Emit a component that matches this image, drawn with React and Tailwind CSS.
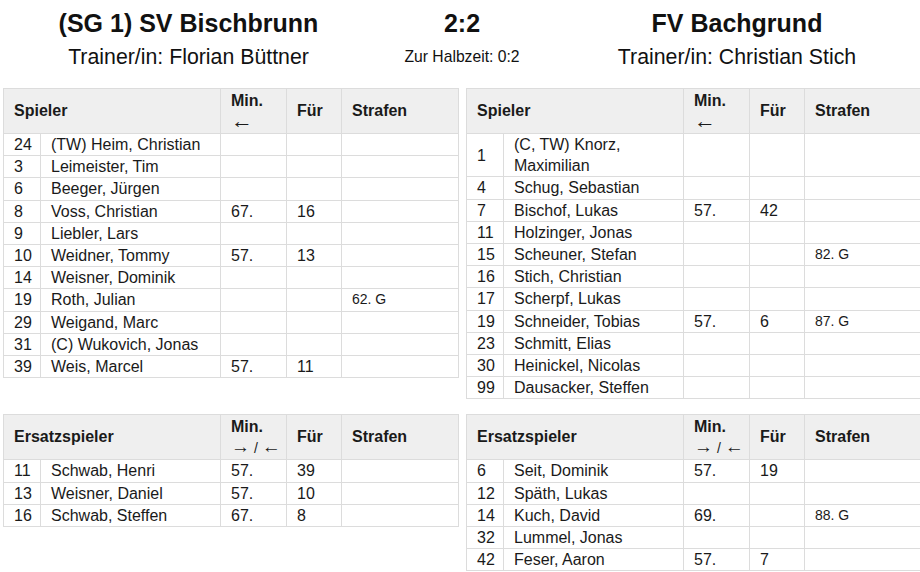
const home = {
  team: '(SG 1) SV Bischbrunn',
  coach: 'Florian Büttner',
  players: [
    ['24', '(TW) Heim, Christian', '', '', ''],
    ['3', 'Leimeister, Tim', '', '', ''],
    ['6', 'Beeger, Jürgen', '', '', ''],
    ['8', 'Voss, Christian', '67.', '16', ''],
    ['9', 'Liebler, Lars', '', '', ''],
    ['10', 'Weidner, Tommy', '57.', '13', ''],
    ['14', 'Weisner, Dominik', '', '', ''],
    ['19', 'Roth, Julian', '', '', '62. G'],
    ['29', 'Weigand, Marc', '', '', ''],
    ['31', '(C) Wukovich, Jonas', '', '', ''],
    ['39', 'Weis, Marcel', '57.', '11', ''],
  ],
  subs: [
    ['11', 'Schwab, Henri', '57.', '39', ''],
    ['13', 'Weisner, Daniel', '57.', '10', ''],
    ['16', 'Schwab, Steffen', '67.', '8', ''],
  ],
};

const away = {
  team: 'FV Bachgrund',
  coach: 'Christian Stich',
  players: [
    ['1', '(C, TW) Knorz, Maximilian', '', '', ''],
    ['4', 'Schug, Sebastian', '', '', ''],
    ['7', 'Bischof, Lukas', '57.', '42', ''],
    ['11', 'Holzinger, Jonas', '', '', ''],
    ['15', 'Scheuner, Stefan', '', '', '82. G'],
    ['16', 'Stich, Christian', '', '', ''],
    ['17', 'Scherpf, Lukas', '', '', ''],
    ['19', 'Schneider, Tobias', '57.', '6', '87. G'],
    ['23', 'Schmitt, Elias', '', '', ''],
    ['30', 'Heinickel, Nicolas', '', '', ''],
    ['99', 'Dausacker, Steffen', '', '', ''],
  ],
  subs: [
    ['6', 'Seit, Dominik', '57.', '19', ''],
    ['12', 'Späth, Lukas', '', '', ''],
    ['14', 'Kuch, David', '69.', '', '88. G'],
    ['32', 'Lummel, Jonas', '', '', ''],
    ['42', 'Feser, Aaron', '57.', '7', ''],
  ],
};

function LineupTable({ title, subs, rows }) {
  const th = 'border border-[#dcdcdc] px-[10px] py-[2px] text-left align-middle text-[16px] font-bold leading-[20px]';
  const td = 'border border-[#dcdcdc] px-[10px] py-0 align-middle leading-[21.2px]';
  return (
    <table className="w-[456px] table-fixed border-collapse text-[16px] text-[#1a1a1a]">
      <colgroup>
        <col className="w-[37px]" />
        <col className="w-[180px]" />
        <col className="w-[66px]" />
        <col className="w-[55px]" />
        <col />
      </colgroup>
      <thead>
        <tr className="bg-[#efefef]">
          <th colSpan={2} className={th}>{title}</th>
          <th className={th}>
            Min.
            <span className="block h-[20px] overflow-visible whitespace-nowrap font-normal leading-[20px]">
              {subs ? (
                <>
                  <span className="text-[19px] leading-[20px]">→</span>
                  <span className="text-[14px] leading-[20px]"> / </span>
                  <span className="text-[19px] leading-[20px]">←</span>
                </>
              ) : (
                <span className="text-[22px] leading-[20px]">←</span>
              )}
            </span>
          </th>
          <th className={th}>Für</th>
          <th className={th}>Strafen</th>
        </tr>
      </thead>
      <tbody>
        {rows.map(([nr, name, min, fuer, strafe]) => (
          <tr key={nr + name}>
            <td className={td}>{nr}</td>
            <td className={td}>{name}</td>
            <td className={td}>{min}</td>
            <td className={td}>{fuer}</td>
            <td className={`${td} text-[14px]`}>{strafe}</td>
          </tr>
        ))}
      </tbody>
    </table>
  );
}

export default function App() {
  return (
    <div className="h-[572px] w-[920px] overflow-hidden bg-white" style={{ fontFamily: '"Liberation Sans", Arial, sans-serif' }}>
      <div className="w-[925px] pl-[3px] text-[#111]">
        <div className="grid grid-cols-[371px_176px_374px] pt-[8px] text-center">
          <div className="text-[25px] font-bold leading-[30px]">{home.team}</div>
          <div className="text-[25px] font-bold leading-[30px]">2:2</div>
          <div className="text-[25px] font-bold leading-[30px]">{away.team}</div>
          <div className="pt-[4px] text-[21.3px] leading-[30px]">Trainer/in: {home.coach}</div>
          <div className="pt-[4px] text-[15.7px] leading-[30px]">Zur Halbzeit: 0:2</div>
          <div className="pt-[4px] text-[21.3px] leading-[30px]">Trainer/in: {away.coach}</div>
        </div>

        <div className="mt-[16px] grid grid-cols-[456px_456px] items-start gap-x-[7px] gap-y-[15px]">
          <LineupTable title="Spieler" rows={home.players} />
          <LineupTable title="Spieler" rows={away.players} />
          <LineupTable title="Ersatzspieler" subs rows={home.subs} />
          <LineupTable title="Ersatzspieler" subs rows={away.subs} />
        </div>
      </div>
    </div>
  );
}
